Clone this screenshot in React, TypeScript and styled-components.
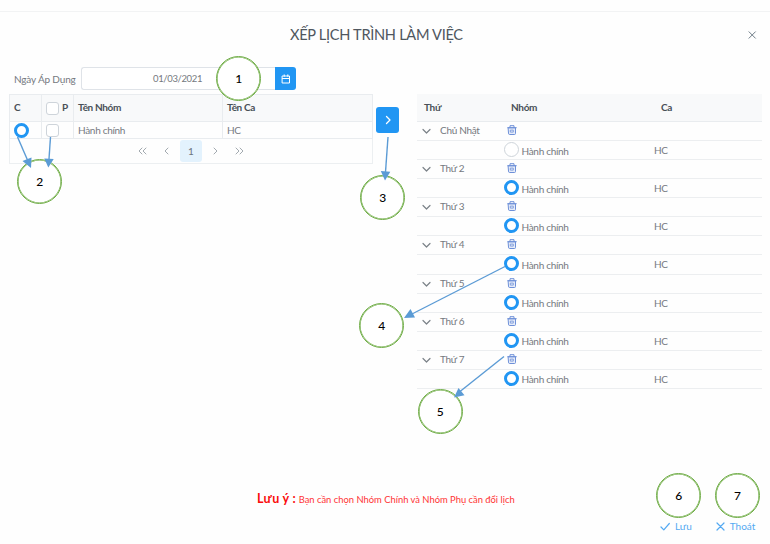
import React from "react";
import styled, { createGlobalStyle } from "styled-components";

const Global = createGlobalStyle`
  * { box-sizing: border-box; }
  body { margin: 0; background: #fefefe; overflow: hidden; }
`;

const Page = styled.main`
  position: relative;
  width: 770px;
  height: 544px;
  display: flex;
  flex-direction: column;
  background: #fefefe;
  color: #75797e;
  font: 10px/14px Lato, "Noto Sans", sans-serif;
  letter-spacing: -0.3px;
  white-space: nowrap;
`;

const TopStrip = styled.div`
  height: 12px;
  border-bottom: 1px solid #f2f3f4;
`;

const Header = styled.header`
  height: 55px;
  display: grid;
  grid-template-columns: 290px 1fr 23px;
  align-items: start;
  padding-top: 12px;
`;

const Title = styled.h1`
  grid-column: 2;
  margin: 0;
  font-size: 14.6px;
  line-height: 22px;
  font-weight: 400;
  letter-spacing: -0.3px;
  color: #50575f;
`;

const Close = styled.button`
  border: 0;
  padding: 0;
  margin-top: 6px;
  width: 12px;
  height: 10px;
  background: none;
  display: flex;
`;

const Body = styled.div`
  display: grid;
  grid-template-columns: 364px 53px 345px;
  height: 408px;
  align-items: start;
`;

const LeftPane = styled.section`
  padding-left: 9px;
`;

const DateBar = styled.div`
  height: 24px;
  display: flex;
  align-items: stretch;
  margin: 0 0 3px;
`;

const DateLabel = styled.label`
  width: 72px;
  padding: 5px 0 0 5px;
  letter-spacing: -0.15px;
`;

const DateField = styled.div`
  width: 194px;
  height: 23px;
  padding: 4px 0 0 71px;
  border: 1px solid #dfe3e8;
  border-right: 0;
  border-radius: 3px 0 0 3px;
  background: #fff;
  font-size: 9.5px;
  letter-spacing: -0.36px;
`;

const DateButton = styled.button`
  width: 21px;
  height: 23px;
  border: 0;
  padding: 0;
  border-radius: 0 3px 3px 0;
  background: #2196f3;
  display: grid;
  place-items: center;
`;

const GroupGrid = styled.div`
  width: 364px;
  display: grid;
  grid-template-columns: 32px 32px 149px 150px;
  border-left: 1px solid #e9ecef;
`;

const HeadCell = styled.div`
  height: 28px;
  padding: 0 5px 2px 4px;
  display: flex;
  align-items: center;
  gap: 3px;
  border: solid #e9ecef;
  border-width: 1px 1px 1px 0;
  background: #f8f9fa;
  color: #495057;
  font-weight: 700;
  letter-spacing: -0.35px;
`;

const Cell = styled.div`
  height: 17px;
  padding: 0 4px;
  display: flex;
  align-items: center;
  border: solid #e9ecef;
  border-width: 0 1px 1px 0;
`;

const Checkbox = styled.span`
  width: 13px;
  height: 13px;
  flex: none;
  border: 1px solid #ced4da;
  border-radius: 3px;
  background: #fff;
`;

const HeadCheckbox = styled(Checkbox)`
  margin-top: 2px;
`;

const Radio = styled.span<{ $on?: boolean }>`
  width: 15px;
  height: 15px;
  flex: none;
  border: ${(p) => (p.$on ? "3px solid #2196f3" : "1px solid #ced4da")};
  border-radius: 50%;
  background: #fff;
`;

const Pager = styled.nav`
  width: 364px;
  height: 25px;
  padding-bottom: 1px;
  display: flex;
  justify-content: center;
  align-items: center;
  gap: 2px;
  border: solid #eceff1;
  border-width: 0 1px 1px;
`;

const PageButton = styled.button<{ $active?: boolean }>`
  width: 22.4px;
  height: 22px;
  padding: 0;
  border: 0;
  border-radius: 3px;
  font: inherit;
  color: #6c757d;
  background: ${(p) => (p.$active ? "#e3f2fd" : "transparent")};
  display: grid;
  place-items: center;
`;

const MoveButton = styled.button`
  width: 23px;
  height: 26px;
  margin: 40px 0 0 12px;
  padding: 0;
  border: 0;
  border-radius: 3px;
  background: #2196f3;
  display: grid;
  place-items: center;
`;

const Schedule = styled.section`
  margin-top: 27px;
`;

const ScheduleHead = styled.div`
  height: 28px;
  display: grid;
  grid-template-columns: 87px 150px 1fr;
  align-items: center;
  padding: 0 0 1px 7px;
  background: #f8f9fa;
  border-bottom: 1px solid #e9ecef;
  color: #495057;
  font-weight: 700;
  letter-spacing: -0.3px;
`;

const ScheduleRow = styled.div`
  height: 19.07px;
  display: grid;
  grid-template-columns: 23px 64px 150px 1fr;
  align-items: center;
  border-bottom: 1px solid #eceef0;
`;

const ChevronSlot = styled.span`
  display: flex;
  padding: 1px 0 0 5px;
`;

const DayName = styled.span`
  padding-bottom: 2px;
`;

const TrashSlot = styled.span`
  display: flex;
  padding: 0 0 2px 3px;
`;

const GroupChoice = styled.span`
  grid-column: 3;
  display: flex;
  gap: 2.5px;
  align-items: center;
  padding-bottom: 1px;
`;

const GroupName = styled.span`
  padding-top: 2px;
`;

const Note = styled.p`
  margin: 0;
  height: 41px;
  padding: 17px 0 0 257px;
  font-size: 9.4px;
  color: #ff3434;
  letter-spacing: 0;
`;

const NoteLead = styled.strong`
  font-size: 12.5px;
  letter-spacing: 0.35px;
  color: #fa0d0d;
  margin-right: 2.5px;
`;

const Footer = styled.footer`
  display: flex;
  gap: 24px;
  padding: 3px 0 0 660px;
`;

const Action = styled.button`
  display: flex;
  align-items: center;
  gap: 5px;
  padding: 0;
  border: 0;
  background: none;
  color: #53a9f2;
  font: inherit;
`;

const Annotations = styled.div`
  position: absolute;
  inset: 0;
  pointer-events: none;
`;

const Callout = styled.div<{ $x: number; $y: number }>`
  position: absolute;
  left: ${(p) => p.$x - 22.5}px;
  top: ${(p) => p.$y - 22.5}px;
  width: 45px;
  height: 45px;
  border: 1px solid #70ad47;
  box-shadow: inset 0 0 0 0.6px #70ad47;
  border-radius: 50%;
  background: #fff;
  color: #000;
  font: 500 12px Lato, sans-serif;
  letter-spacing: 0;
  display: grid;
  place-items: center;
`;

const ArrowLayer = styled.svg`
  position: absolute;
  inset: 0;
`;

type IconProps = { d: string; w: number; h: number; color: string; stroke?: number };

const Icon = ({ d, w, h, color, stroke = 1.2 }: IconProps) => (
  <svg width={w} height={h} viewBox={`0 0 ${w} ${h}`} fill="none" stroke={color} strokeWidth={stroke} strokeLinecap="round" strokeLinejoin="round">
    <path d={d} />
  </svg>
);

const Trash = () => (
  <svg width="10" height="10" viewBox="0 0 10 10" fill="none" stroke="#6e90d8" strokeWidth="1" strokeLinecap="round" strokeLinejoin="round">
    <path d="M1.5 2.8h7v5.7q0 1-1 1h-5q-1 0-1-1z" fill="#e6ecf9" />
    <path d="M.7 2.7h8.6M3 2.4V.7h4v1.7" />
    <path d="M3.7 5.1h2.6v2H3.7z" strokeWidth=".8" />
  </svg>
);

const pages = [
  { d: "M5 2 2 5l3 3M9 2 6 5l3 3" },
  { d: "M7 2 4 5l3 3" },
  { label: "1" },
  { d: "M4 2l3 3-3 3" },
  { d: "M2 2l3 3-3 3M6 2l3 3-3 3" },
];

const days = ["Chủ Nhật", "Thứ 2", "Thứ 3", "Thứ 4", "Thứ 5", "Thứ 6", "Thứ 7"];

const callouts = [
  [238.8, 78], [39.8, 181.3], [382.7, 197.3], [381.8, 325.5], [440.2, 411.7], [678.8, 495.7], [737.4, 495.7],
];

const arrows = [
  { line: "M17.5 137 27.5 160", head: "M31 168 22.5 161 31.5 157.5z" },
  { line: "M50.5 137 49 159", head: "M48.3 167.5 44.3 158.5 53.7 159z" },
  { line: "M388 137 385.5 172", head: "M385 180.5 380.8 171 390.3 171.7z" },
  { line: "M505 266.5 411 314.5", head: "M404 318 410.5 309 415 317.5z" },
  { line: "M504 356.5 460 391.5", head: "M454 397.5 458.5 388 464.5 395.2z" },
];

export default function App() {
  return (
    <Page>
      <Global />
      <TopStrip />
      <Header>
        <Title>XẾP LỊCH TRÌNH LÀM VIỆC</Title>
        <Close aria-label="Đóng"><Icon w={10} h={10} d="M2 1.8l6.4 6.4M8.4 1.8 2 8.2" color="#6f7d88" stroke={1} /></Close>
      </Header>
      <Body>
        <LeftPane>
          <DateBar>
            <DateLabel>Ngày Áp Dụng</DateLabel>
            <DateField>01/03/2021</DateField>
            <DateButton aria-label="Chọn ngày">
              <Icon w={10} h={10} d="M1.5 2h7v7h-7zM1.5 4.5h7M3.2.8v1.6M6.8.8v1.6" color="#fff" stroke={1} />
            </DateButton>
          </DateBar>
          <GroupGrid>
            <HeadCell>C</HeadCell>
            <HeadCell><HeadCheckbox />P</HeadCell>
            <HeadCell>Tên Nhóm</HeadCell>
            <HeadCell>Tên Ca</HeadCell>
            <Cell><Radio $on /></Cell>
            <Cell><Checkbox /></Cell>
            <Cell>Hành chính</Cell>
            <Cell>HC</Cell>
          </GroupGrid>
          <Pager>
            {pages.map((p, i) => (
              <PageButton key={i} $active={!!p.label}>
                {p.label ?? <Icon w={11} h={10} d={p.d!} color="#a3aab0" stroke={1} />}
              </PageButton>
            ))}
          </Pager>
        </LeftPane>
        <MoveButton aria-label="Chuyển">
          <Icon w={10} h={12} d="M3.5 2.5 7 6 3.5 9.5" color="#fff" stroke={1.3} />
        </MoveButton>
        <Schedule>
          <ScheduleHead><span>Thứ</span><span>Nhóm</span><span>Ca</span></ScheduleHead>
          {days.map((day, i) => (
            <React.Fragment key={day}>
              <ScheduleRow>
                <ChevronSlot><Icon w={9} h={7} d="M1 1.5l3.5 3.5L8 1.5" color="#7b8288" /></ChevronSlot>
                <DayName>{day}</DayName>
                <TrashSlot><Trash /></TrashSlot>
              </ScheduleRow>
              <ScheduleRow>
                <GroupChoice><Radio $on={i > 0} /><GroupName>Hành chính</GroupName></GroupChoice>
                <span>HC</span>
              </ScheduleRow>
            </React.Fragment>
          ))}
        </Schedule>
      </Body>
      <Note><NoteLead>Lưu ý :</NoteLead>Bạn cần chọn Nhóm Chính và Nhóm Phụ cần đổi lịch</Note>
      <Footer>
        <Action><Icon w={10} h={9} d="M1 5l2.8 2.8L9.3 1.5" color="#53a9f2" />Lưu</Action>
        <Action><Icon w={9} h={9} d="M1 1l7 7M8 1 1 8" color="#53a9f2" />Thoát</Action>
      </Footer>
      <Annotations>
        {callouts.map(([x, y], i) => <Callout key={i} $x={x} $y={y}>{i + 1}</Callout>)}
        <ArrowLayer width="770" height="544" viewBox="0 0 770 544">
          {arrows.map((a) => (
            <g key={a.line}>
              <path d={a.line} stroke="#5b9bd5" strokeWidth="1.4" />
              <path d={a.head} fill="#5b9bd5" />
            </g>
          ))}
        </ArrowLayer>
      </Annotations>
    </Page>
  );
}
